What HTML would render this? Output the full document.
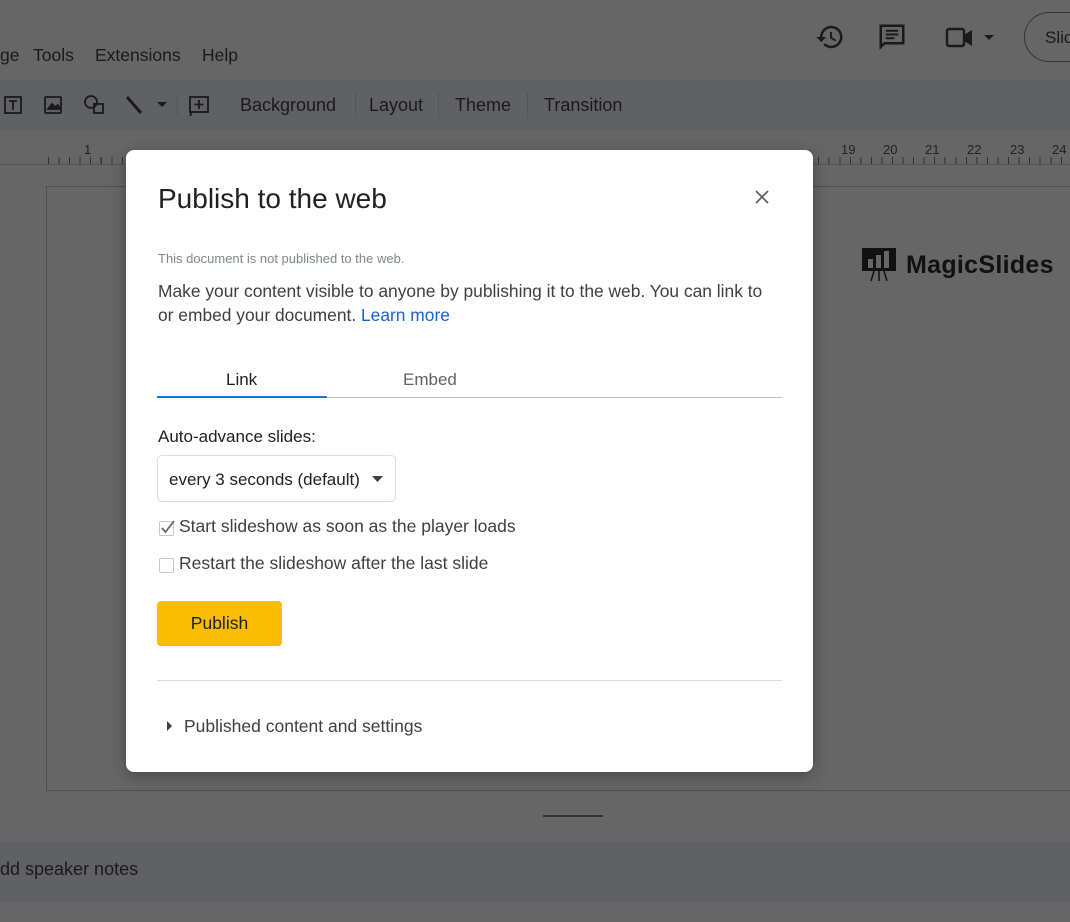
<!DOCTYPE html>
<html style="background:#666"><head><meta charset="utf-8"><style>
*{margin:0;padding:0;box-sizing:border-box}
body{width:1070px;height:922px;overflow:hidden;background:#666;font-family:"Liberation Sans",Arial,sans-serif;position:relative}
.a{position:absolute;white-space:nowrap}
.dk{color:#1a1a1a}
</style></head><body>
<!-- menu -->
<div class="a dk" style="left:0;top:45px;font-size:17.5px;"><span>ge</span><span style="position:absolute;left:33px">Tools</span><span style="position:absolute;left:95px">Extensions</span><span style="position:absolute;left:202px">Help</span></div>
<!-- top right icons -->
<svg class="a" style="left:815px;top:22px" width="30" height="30" viewBox="0 0 24 24"><path d="M13 3a9 9 0 0 0-9 9H1l4 4 4-4H6a7 7 0 1 1 2.1 5l-1.4 1.4A9 9 0 1 0 13 3zm-1 5v5l4.3 2.5.7-1.2-3.5-2.1V8z" fill="#1a1a1a"/></svg>
<svg class="a" style="left:877px;top:22px" width="30" height="30" viewBox="0 0 24 24"><path d="M3 3h18v14H6l-3 3z" fill="none" stroke="#1a1a1a" stroke-width="2"/><path d="M7 7h10M7 10h10M7 13h7" stroke="#1a1a1a" stroke-width="1.6"/></svg>
<svg class="a" style="left:944px;top:24px" width="50" height="28" viewBox="0 0 50 28"><rect x="3" y="5" width="17" height="17" rx="2" fill="none" stroke="#1a1a1a" stroke-width="2.4"/><path d="M20 11l8-5v16l-8-5z" fill="#1a1a1a"/><path d="M40 11h10l-5 5z" fill="#1a1a1a"/></svg>
<div class="a" style="left:1024px;top:12px;width:80px;height:50px;border:1.5px solid #333;border-radius:25px;font-size:17px;padding:15px 0 0 20px;color:#1a1a1a">Slic</div>
<!-- toolbar -->
<div class="a" style="left:0;top:80px;width:1070px;height:50px;background:#5f6165"></div>
<svg class="a" style="left:0;top:92px" width="215" height="26" viewBox="0 0 215 26">
<g fill="none" stroke="#1a1a1a" stroke-width="1.8">
<rect x="5" y="5" width="16" height="16"/><path d="M9 9h8M13 9v9"/>
<rect x="45" y="5" width="16" height="16" rx="1"/><path d="M48 17l4-5 3 3 3-2 2 4z" fill="#1a1a1a"/>
<circle cx="91" cy="10" r="6"/><rect x="94" y="12" width="9" height="9"/>
<path d="M127 5l14 16" stroke-width="3"/>
<rect x="190" y="5" width="18" height="15"/><path d="M199 8v9M194.5 12.5h9M192 20l-2 4"/>
</g><path d="M157 10h10l-5 5z" fill="#1a1a1a"/><path d="M177 3v20" stroke="#555" stroke-width="1"/></svg>
<div class="a dk" style="left:240px;top:95px;font-size:18px">Background</div>
<div class="a" style="left:355px;top:92px;width:1px;height:26px;background:#555"></div>
<div class="a dk" style="left:369px;top:95px;font-size:18px">Layout</div>
<div class="a" style="left:438px;top:92px;width:1px;height:26px;background:#555"></div>
<div class="a dk" style="left:455px;top:95px;font-size:18px">Theme</div>
<div class="a" style="left:527px;top:92px;width:1px;height:26px;background:#555"></div>
<div class="a dk" style="left:544px;top:95px;font-size:18px">Transition</div>
<!-- ruler -->
<div class="a" style="left:0;top:164px;width:1070px;height:1px;background:#555"></div>
<div class="a" style="left:48px;top:157px;width:1022px;height:7px;background:repeating-linear-gradient(90deg,#333 0 1px,transparent 1px 10.55px)"></div>
<div class="a" style="left:46px;top:142px;width:1030px;font-family:'Liberation Sans',sans-serif;font-size:13px;color:#222">
<span style="position:absolute;left:38px">1</span><span style="position:absolute;left:795px">19</span><span style="position:absolute;left:837px">20</span><span style="position:absolute;left:879px">21</span><span style="position:absolute;left:921px">22</span><span style="position:absolute;left:964px">23</span><span style="position:absolute;left:1006px">24</span></div>
<!-- slide -->
<div class="a" style="left:46px;top:186px;width:1030px;height:605px;border:1px solid #4f4f4f"></div>
<svg class="a" style="left:862px;top:247px" width="36" height="34" viewBox="0 0 36 34"><rect x="0" y="1" width="34" height="23" fill="#111"/><rect x="6" y="12" width="5" height="9" fill="#666"/><rect x="14" y="8" width="5" height="13" fill="#666"/><rect x="22" y="4" width="5" height="17" fill="#666"/><path d="M12 24l-3 10M17 24v10M22 24l3 10" stroke="#111" stroke-width="1.5"/></svg>
<div class="a" style="left:906px;top:251px;font-size:25px;font-weight:bold;color:#111;letter-spacing:0.3px">MagicSlides</div>
<div class="a" style="left:543px;top:815px;width:60px;height:2px;background:#333"></div>
<!-- notes -->
<div class="a" style="left:0;top:842px;width:1070px;height:60px;background:#5f6165"></div>
<div class="a dk" style="left:0;top:859px;font-size:18px">dd speaker notes</div>
<!-- dialog -->
<div class="a" style="left:126px;top:150px;width:687px;height:622px;background:#fff;border-radius:8px;box-shadow:0 4px 16px rgba(0,0,0,.3)">
<div class="a" style="left:32px;top:33px;font-size:28px;color:#202124">Publish to the web</div>
<svg class="a" style="left:628px;top:39px" width="16" height="16" viewBox="0 0 16 16"><path d="M2 2l12 12M14 2L2 14" stroke="#5f6368" stroke-width="1.8"/></svg>
<div class="a" style="left:32px;top:101px;font-size:13px;color:#80868b">This document is not published to the web.</div>
<div class="a" style="left:32px;top:129px;font-size:17.4px;color:#3c4043;line-height:24px">Make your content visible to anyone by publishing it to the web. You can link to<br>or embed your document. <span style="color:#1a5fd6">Learn more</span></div>
<div class="a" style="left:100px;top:220px;font-size:17px;color:#202124">Link</div>
<div class="a" style="left:277px;top:220px;font-size:17px;color:#5f6368">Embed</div>
<div class="a" style="left:31px;top:247px;width:625px;height:1px;background:#c0c0c0"></div>
<div class="a" style="left:31px;top:246px;width:170px;height:2px;background:#1a73e8"></div>
<div class="a" style="left:32px;top:277px;font-size:17px;color:#202124">Auto-advance slides:</div>
<div class="a" style="left:31px;top:305px;width:239px;height:47px;border:1px solid #dadce0;border-radius:5px;font-size:17px;color:#202124;padding:14px 0 0 11px">every 3 seconds (default)</div>
<svg class="a" style="left:246px;top:326px" width="12" height="6"><path d="M0 0h11L5.5 6z" fill="#3c4043"/></svg>
<div class="a" style="left:33px;top:371px;width:15px;height:15px;border:1px solid #c8c8c8;border-radius:2px"></div>
<svg class="a" style="left:34px;top:369px" width="16" height="16"><path d="M2 9l3.5 4L14 2" fill="none" stroke="#666" stroke-width="1.8"/></svg>
<div class="a" style="left:53px;top:366px;font-size:17.5px;color:#3c4043">Start slideshow as soon as the player loads</div>
<div class="a" style="left:33px;top:408px;width:15px;height:15px;border:1px solid #c8c8c8;border-radius:2px"></div>
<div class="a" style="left:53px;top:403px;font-size:17.5px;color:#3c4043">Restart the slideshow after the last slide</div>
<div class="a" style="left:31px;top:451px;width:125px;height:45px;background:#fbbc04;border-radius:4px;font-size:17.5px;color:#202124;text-align:center;padding-top:12px">Publish</div>
<div class="a" style="left:31px;top:530px;width:625px;height:1px;background:#dadce0"></div>
<svg class="a" style="left:41px;top:571px" width="6" height="10"><path d="M0 0l5 5-5 5z" fill="#3c4043"/></svg>
<div class="a" style="left:58px;top:566px;font-size:17.5px;color:#3c4043">Published content and settings</div>
</div>
</body></html>
